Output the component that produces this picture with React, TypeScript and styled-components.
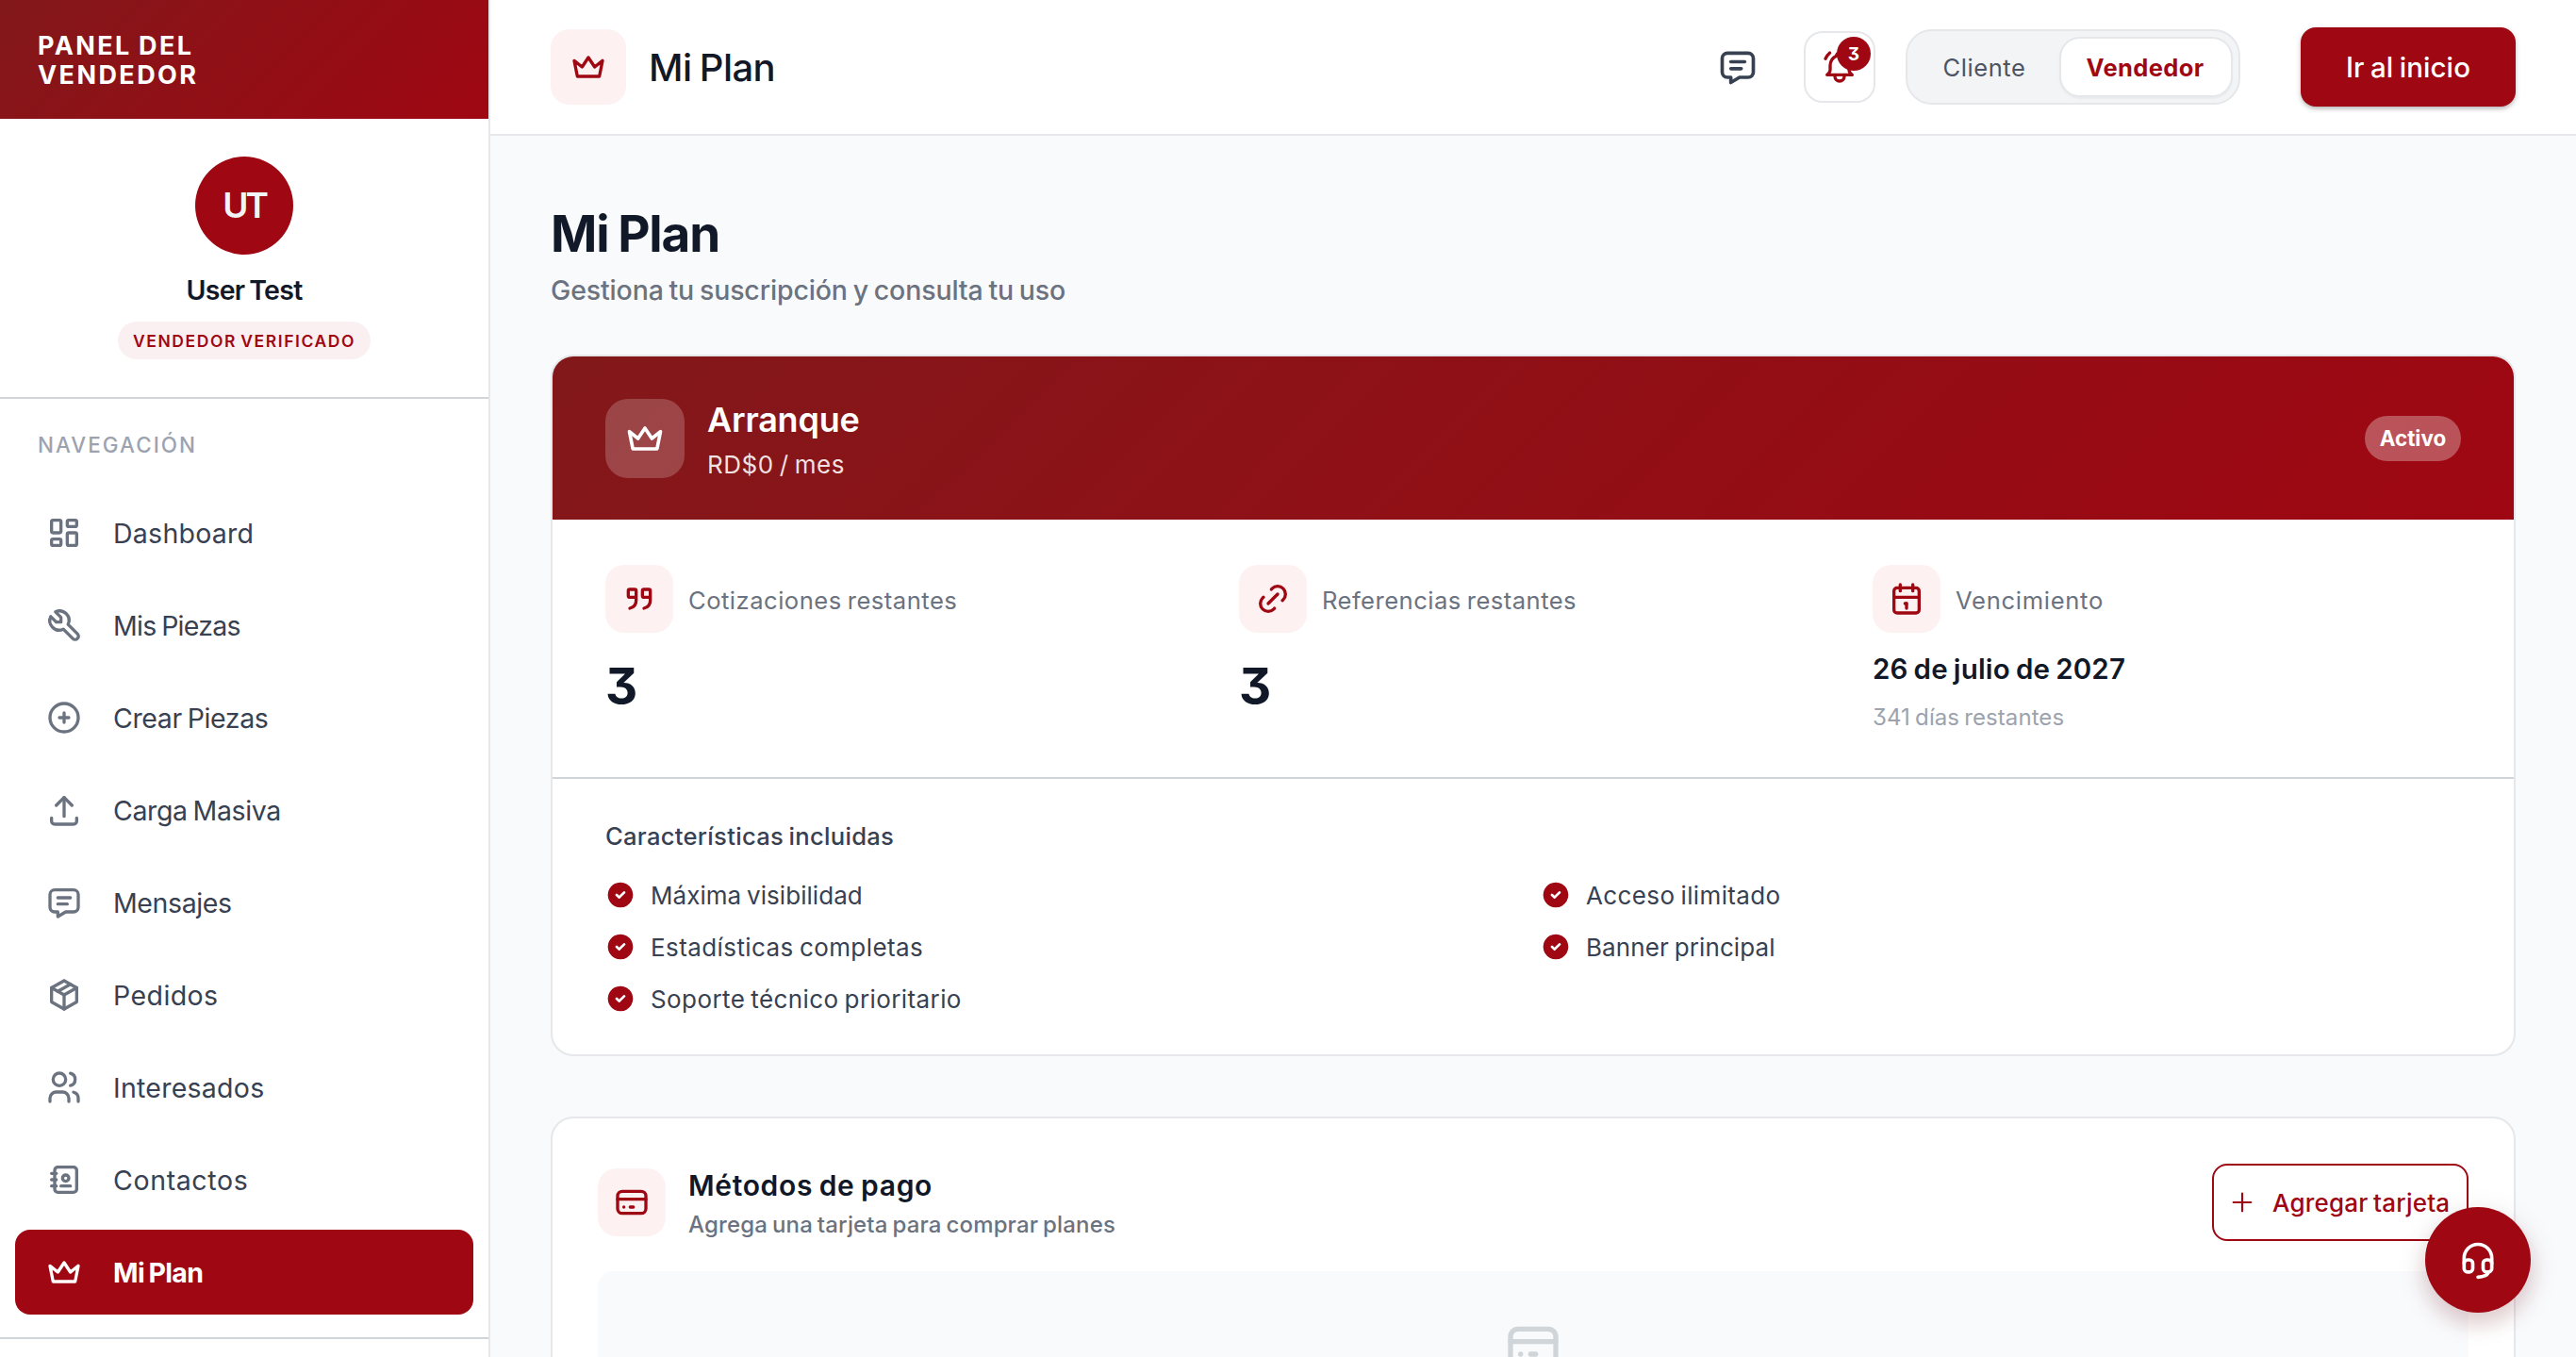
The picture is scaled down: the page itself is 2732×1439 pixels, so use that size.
import React from "react";
import styled, { createGlobalStyle, css } from "styled-components";
import type { IconType } from "react-icons";
import {
  TbAddressBook,
  TbBellRinging,
  TbCalendar,
  TbCircleCheckFilled,
  TbCirclePlus,
  TbCreditCard,
  TbCrown,
  TbHeadset,
  TbLayoutDashboard,
  TbLink,
  TbMessage,
  TbPackage,
  TbPlus,
  TbQuote,
  TbTool,
  TbUpload,
  TbUsers,
} from "react-icons/tb";

const color = {
  brand: "#9f0712",
  brandDark: "#82181a",
  tint: "#fdf1f1",
  ink: "#111827",
  body: "#374151",
  muted: "#6b7280",
  faint: "#9ca3af",
  line: "#e5e7eb",
  rule: "#cfd5d9",
  page: "#f9fafc",
};

const GlobalStyle = createGlobalStyle`
  *, *::before, *::after { box-sizing: border-box; }
  body {
    margin: 0;
    background: ${color.page};
    color: ${color.ink};
    font-family: Inter, "Liberation Sans", sans-serif;
    font-feature-settings: "cv09" 1;
    word-spacing: -0.1em;
  }
  button { font: inherit; font-feature-settings: inherit; word-spacing: inherit; margin: 0; padding: 0; border: 0; background: none; }
  h1, h2, h3, p, ul { margin: 0; padding: 0; list-style: none; font-weight: inherit; }
  svg { display: block; flex: none; }
`;

const flexCenter = css`
  display: flex;
  align-items: center;
  justify-content: center;
`;

type TextProps = {
  $size: number;
  $line: number;
  $weight?: number;
  $track?: number;
  $color?: string;
};

const textStyle = css<TextProps>`
  font-size: ${(p) => p.$size}px;
  line-height: ${(p) => p.$line}px;
  font-weight: ${(p) => p.$weight ?? 400};
  letter-spacing: ${(p) => p.$track ?? 0}em;
  color: ${(p) => p.$color ?? color.ink};
  white-space: nowrap;
`;

const Text = styled.p<TextProps>`
  ${textStyle}
`;

const Shell = styled.div`
  display: grid;
  grid-template-columns: 520px 1fr;
  height: 1439px;
  overflow: hidden;
`;

/* Sidebar */

const Sidebar = styled.aside`
  display: flex;
  flex-direction: column;
  background: #fff;
  border-right: 2px solid ${color.line};
`;

const Brand = styled.div`
  height: 126px;
  padding: 33px 40px 0;
  background: linear-gradient(135deg, ${color.brandDark}, ${color.brand});
`;

const Profile = styled.div`
  display: flex;
  flex-direction: column;
  align-items: center;
  padding: 40px 0;
  border-bottom: 2px solid ${color.rule};
`;

const Avatar = styled.div`
  ${flexCenter}
  width: 104px;
  height: 104px;
  margin-bottom: 16px;
  border-radius: 50%;
  background: ${color.brand};
`;

const RoleBadge = styled.div`
  ${flexCenter}
  width: 268px;
  height: 40px;
  margin-top: 11px;
  padding-top: 1px;
  border-radius: 20px;
  background: #faf0f1;
`;

const Nav = styled.nav`
  padding: 31px 16px 24px;
  border-bottom: 2px solid ${color.rule};
`;

const NavHeading = styled(Text)`
  padding: 0 24px;
  margin-bottom: 30px;
`;

const NavList = styled.ul`
  display: flex;
  flex-direction: column;
  gap: 8px;
`;

const NavItem = styled.li<{ $active?: boolean; $track: number }>`
  display: flex;
  align-items: center;
  gap: 32px;
  height: 90px;
  padding-left: 32px;
  border-radius: 16px;
  background: ${(p) => (p.$active ? color.brand : "transparent")};
  color: ${(p) => (p.$active ? "#fff" : color.body)};
  font-size: 28.5px;
  font-weight: ${(p) => (p.$active ? 700 : 400)};
  letter-spacing: ${(p) => p.$track}em;
  line-height: 40px;

  svg {
    color: ${(p) => (p.$active ? "#fff" : color.muted)};
  }

  span {
    padding-top: 2px;
  }
`;

/* Top bar */

const Main = styled.div`
  display: flex;
  flex-direction: column;
  min-width: 0;
`;

const TopBar = styled.header`
  display: flex;
  align-items: center;
  height: 144px;
  flex: none;
  padding: 0 64px;
  background: #fff;
  border-bottom: 2px solid ${color.line};
`;

const IconTile = styled.div<{ $size: number }>`
  ${flexCenter}
  flex: none;
  width: ${(p) => p.$size}px;
  height: ${(p) => p.$size}px;
  border-radius: 20px;
  background: ${color.tint};
  color: ${color.brand};
`;

const BarTitle = styled(Text)`
  margin-left: 24px;
  padding-top: 2px;
`;

const BarActions = styled.div`
  display: flex;
  align-items: center;
  gap: 32px;
  margin-left: auto;
`;

const GhostButton = styled.button`
  ${flexCenter}
  width: 76px;
  height: 76px;
  color: ${color.body};
`;

const BellButton = styled(GhostButton)`
  position: relative;
  border: 2px solid ${color.line};
  border-radius: 20px;
  color: ${color.brand};
`;

const BellCount = styled.span`
  ${flexCenter}
  position: absolute;
  top: 4px;
  right: 3px;
  width: 36px;
  height: 36px;
  border-radius: 50%;
  background: ${color.brand};
  color: #fff;
  font-size: 19px;
  font-weight: 700;
`;

const RoleSwitch = styled.div`
  display: grid;
  grid-template-columns: 155px 184px;
  width: 355px;
  height: 80px;
  padding: 6px;
  border: 2px solid ${color.line};
  border-radius: 28px;
  background: #f3f4f6;
`;

const RoleOption = styled.button<{ $active?: boolean }>`
  ${flexCenter}
  font-size: 25.5px;
  letter-spacing: ${(p) => (p.$active ? 0.014 : 0.022)}em;
  font-weight: ${(p) => (p.$active ? 700 : 400)};
  color: ${(p) => (p.$active ? color.brand : "#4b5563")};
  padding-right: ${(p) => (p.$active ? 2 : 4)}px;
  border-radius: 22px;
  border: 2px solid ${(p) => (p.$active ? color.line : "transparent")};
  background: ${(p) => (p.$active ? "#fff" : "transparent")};
  box-shadow: ${(p) => (p.$active ? "0 2px 2px rgba(0, 0, 0, 0.04)" : "none")};
`;

const HomeButton = styled.button`
  ${flexCenter}
  width: 228px;
  height: 84px;
  margin-left: 32px;
  border-radius: 16px;
  background: ${color.brand};
  color: #fff;
  font-size: 29.5px;
  font-weight: 500;
  letter-spacing: 0.003em;
  box-shadow: 0 2px 6px rgba(0, 0, 0, 0.16), 0 3px 4px -1px rgba(0, 0, 0, 0.18);
`;

/* Content */

const Content = styled.main`
  display: flex;
  flex-direction: column;
  padding: 72px 64px 0;
`;

const Subtitle = styled(Text)`
  margin: 7px 0 48px;
`;

const Card = styled.section`
  flex: none;
  margin-bottom: 64px;
  border: 2px solid ${color.line};
  border-radius: 24px;
  background: #fff;
  overflow: hidden;
`;

const PlanHeader = styled.div`
  display: flex;
  align-items: center;
  gap: 24px;
  height: 173px;
  padding: 0 56px;
  background: linear-gradient(135deg, ${color.brandDark}, ${color.brand});
`;

const PlanTile = styled(IconTile)`
  border-radius: 24px;
  background: rgba(255, 255, 255, 0.2);
  color: #fff;
`;

const StatusPill = styled.div`
  ${flexCenter}
  width: 102px;
  height: 48px;
  margin-left: auto;
  border-radius: 24px;
  background: rgba(255, 255, 255, 0.3);
`;

const Stats = styled.div`
  display: grid;
  grid-template-columns: repeat(3, 1fr);
  column-gap: 48px;
  height: 275px;
  padding: 48px 56px 0;
  border-bottom: 2px solid ${color.rule};
`;

const StatHead = styled.div`
  display: flex;
  align-items: center;
  gap: 16px;
  margin-bottom: 20px;

  p {
    padding-top: 3px;
  }
`;

const StatNote = styled(Text)`
  margin-top: 14px;
`;

const Features = styled.div`
  padding: 42px 56px 40px;
`;

const FeatureGrid = styled.ul`
  display: grid;
  grid-template-columns: repeat(2, 1fr);
  gap: 16px;
  margin-top: 23px;
`;

const Feature = styled.li`
  display: flex;
  align-items: center;
  gap: 16px;
  height: 39px;

  svg {
    color: ${color.brand};
  }

  p {
    padding-top: 2px;
  }
`;

const PaymentCard = styled(Card)`
  padding: 48px;
`;

const PaymentHead = styled.div`
  display: flex;
  align-items: center;
  gap: 24px;
  height: 82px;
`;

const PaymentText = styled.div`
  padding-top: 4px;
`;

const AddCardButton = styled.button`
  display: flex;
  align-items: center;
  gap: 16px;
  width: 272px;
  height: 82px;
  margin-left: auto;
  padding-left: 14px;
  border: 2px solid ${color.brand};
  border-radius: 16px;
  background: #fff;
  color: ${color.brand};
  font-size: 26px;
  font-weight: 500;
  letter-spacing: 0.008em;
  white-space: nowrap;
`;

const EmptyState = styled.div`
  display: flex;
  justify-content: center;
  height: 320px;
  margin-top: 32px;
  padding-top: 48px;
  border-radius: 16px;
  background: ${color.page};
  color: ${color.rule};
`;

const SupportButton = styled.button`
  ${flexCenter}
  position: fixed;
  right: 48px;
  bottom: 47px;
  width: 112px;
  height: 112px;
  border-radius: 50%;
  background: ${color.brand};
  color: #fff;
  box-shadow: 0 12px 24px rgba(159, 7, 18, 0.14), 0 8px 32px rgba(0, 0, 0, 0.12);
`;

const navItems: { icon: IconType; label: string; track: number; active?: boolean }[] = [
  { icon: TbLayoutDashboard, label: "Dashboard", track: 0.009 },
  { icon: TbTool, label: "Mis Piezas", track: -0.026 },
  { icon: TbCirclePlus, label: "Crear Piezas", track: -0.014 },
  { icon: TbUpload, label: "Carga Masiva", track: -0.014 },
  { icon: TbMessage, label: "Mensajes", track: -0.014 },
  { icon: TbPackage, label: "Pedidos", track: 0.015 },
  { icon: TbUsers, label: "Interesados", track: 0.009 },
  { icon: TbAddressBook, label: "Contactos", track: 0.022 },
  { icon: TbCrown, label: "Mi Plan", track: -0.023, active: true },
];

const features = [
  { label: "Máxima visibilidad", track: 0.002 },
  { label: "Acceso ilimitado", track: 0.0145 },
  { label: "Estadísticas completas", track: 0.016 },
  { label: "Banner principal", track: 0.004 },
  { label: "Soporte técnico prioritario", track: 0.0155 },
];

function StatLabel({ icon: Icon, label, track }: { icon: IconType; label: string; track: number }) {
  return (
    <StatHead>
      <IconTile $size={72}>
        <Icon size={40} />
      </IconTile>
      <Text $size={25.6} $line={36} $track={track} $color={color.muted}>
        {label}
      </Text>
    </StatHead>
  );
}

export default function App() {
  return (
    <>
      <GlobalStyle />
      <Shell>
        <Sidebar>
          <Brand>
            <Text $size={27} $line={31} $weight={700} $track={0.09} $color="#fff">
              PANEL DEL
              <br />
              VENDEDOR
            </Text>
          </Brand>
          <Profile>
            <Avatar>
              <Text $size={37} $line={44} $weight={600} $track={-0.08} $color="#f3f4f6">
                UT
              </Text>
            </Avatar>
            <Text $size={28.5} $line={44} $weight={600} $track={-0.025}>
              User Test
            </Text>
            <RoleBadge>
              <Text $size={17.5} $line={24} $weight={600} $track={0.0895} $color={color.brand}>
                VENDEDOR VERIFICADO
              </Text>
            </RoleBadge>
          </Profile>
          <Nav>
            <NavHeading $size={22.4} $line={36} $weight={500} $track={0.092} $color={color.faint}>
              NAVEGACIÓN
            </NavHeading>
            <NavList>
              {navItems.map(({ icon: Icon, label, track, active }) => (
                <NavItem key={label} $active={active} $track={track}>
                  <Icon size={40} />
                  <span>{label}</span>
                </NavItem>
              ))}
            </NavList>
          </Nav>
        </Sidebar>

        <Main>
          <TopBar>
            <IconTile $size={80}>
              <TbCrown size={40} />
            </IconTile>
            <BarTitle $size={40} $line={48} $weight={500} $track={-0.015}>
              Mi Plan
            </BarTitle>
            <BarActions>
              <GhostButton aria-label="Mensajes">
                <TbMessage size={44} />
              </GhostButton>
              <BellButton aria-label="Notificaciones">
                <TbBellRinging size={40} />
                <BellCount>3</BellCount>
              </BellButton>
              <RoleSwitch>
                <RoleOption>Cliente</RoleOption>
                <RoleOption $active>Vendedor</RoleOption>
              </RoleSwitch>
              <HomeButton>Ir al inicio</HomeButton>
            </BarActions>
          </TopBar>

          <Content>
            <Text as="h1" $size={53} $line={65} $weight={700} $track={-0.022}>
              Mi Plan
            </Text>
            <Subtitle as="p" $size={28.5} $line={40} $weight={500} $track={-0.005} $color={color.muted}>
              Gestiona tu suscripción y consulta tu uso
            </Subtitle>

            <Card>
              <PlanHeader>
                <PlanTile $size={84}>
                  <TbCrown size={44} />
                </PlanTile>
                <div>
                  <Text as="h2" $size={36} $line={55} $weight={600} $track={-0.006} $color="#fff">
                    Arranque
                  </Text>
                  <Text $size={26} $line={39} $track={0.019} $color="rgba(255, 255, 255, 0.88)">
                    RD$0 / mes
                  </Text>
                </div>
                <StatusPill>
                  <Text $size={22.4} $line={28} $weight={700} $color="#fff">
                    Activo
                  </Text>
                </StatusPill>
              </PlanHeader>

              <Stats>
                <div>
                  <StatLabel icon={TbQuote} label="Cotizaciones restantes" track={0.019} />
                  <Text $size={53} $line={74} $weight={700}>
                    3
                  </Text>
                </div>
                <div>
                  <StatLabel icon={TbLink} label="Referencias restantes" track={0.018} />
                  <Text $size={53} $line={74} $weight={700}>
                    3
                  </Text>
                </div>
                <div>
                  <StatLabel icon={TbCalendar} label="Vencimiento" track={0.027} />
                  <Text $size={29.5} $line={37} $weight={600} $track={0.006}>
                    26 de julio de 2027
                  </Text>
                  <StatNote $size={24} $line={38} $track={0.003} $color={color.faint}>
                    341 días restantes
                  </StatNote>
                </div>
              </Stats>

              <Features>
                <Text as="h3" $size={25.6} $line={38} $weight={500} $track={0.011} $color={color.body}>
                  Características incluidas
                </Text>
                <FeatureGrid>
                  {features.map((f) => (
                    <Feature key={f.label}>
                      <TbCircleCheckFilled size={32} />
                      <Text $size={26} $line={38} $track={f.track} $color={color.body}>
                        {f.label}
                      </Text>
                    </Feature>
                  ))}
                </FeatureGrid>
              </Features>
            </Card>

            <PaymentCard>
              <PaymentHead>
                <IconTile $size={72}>
                  <TbCreditCard size={40} />
                </IconTile>
                <PaymentText>
                  <Text as="h2" $size={30} $line={42} $weight={600} $track={0.022}>
                    Métodos de pago
                  </Text>
                  <Text $size={24} $line={41} $weight={500} $track={0.0062} $color={color.muted}>
                    Agrega una tarjeta para comprar planes
                  </Text>
                </PaymentText>
                <AddCardButton>
                  <TbPlus size={32} strokeWidth={1.6} />
                  Agregar tarjeta
                </AddCardButton>
              </PaymentHead>
              <EmptyState>
                <TbCreditCard size={64} />
              </EmptyState>
            </PaymentCard>
          </Content>
        </Main>
      </Shell>
      <SupportButton aria-label="Soporte">
        <TbHeadset size={44} />
      </SupportButton>
    </>
  );
}
